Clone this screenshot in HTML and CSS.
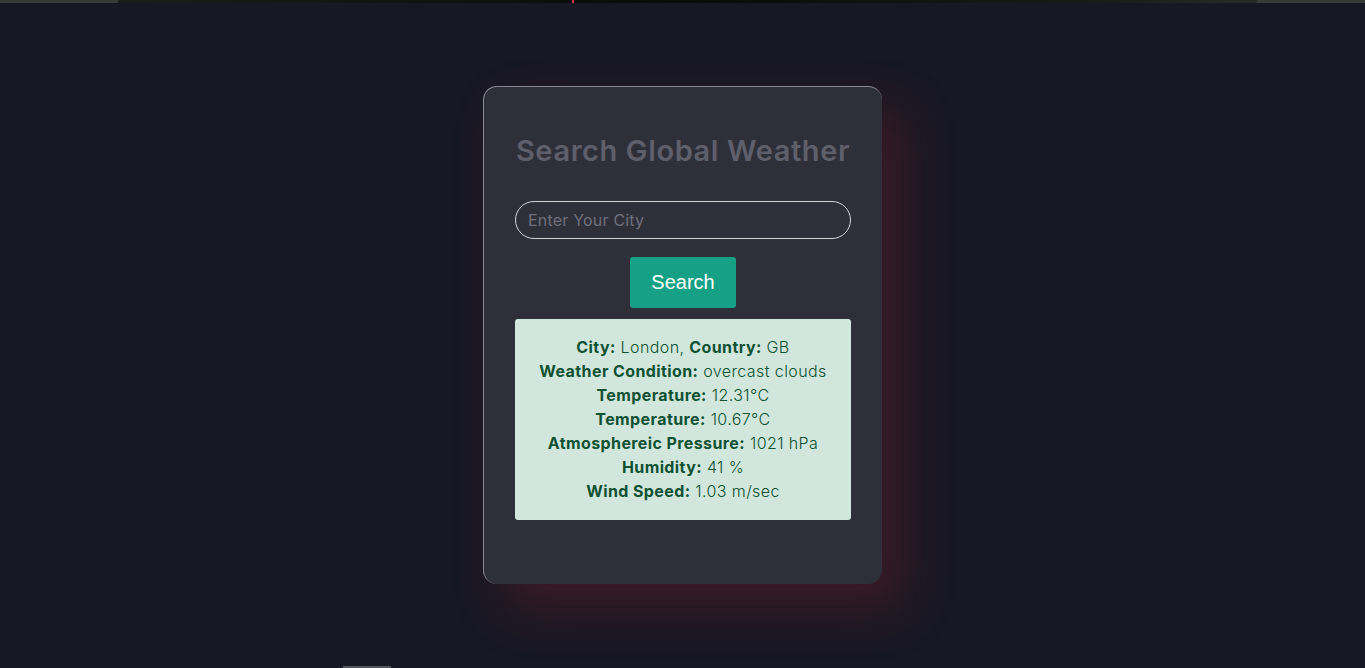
FILE: index.html
```html
<!DOCTYPE html>
<html lang="en">
<head>
<meta charset="utf-8">
<title>Search Global Weather</title>
<link rel="stylesheet" href="styles.css">
</head>
<body>
<div class="topbar"><span class="tb-mark"></span></div>
<main class="page">
  <section class="card">
    <h1 class="title">Search Global Weather</h1>
    <input class="city-input" type="text" placeholder="Enter Your City">
    <div class="btn-row"><button class="search-btn">Search</button></div>
    <div class="result">
      <p><b>City:</b> London, <b>Country:</b> GB</p>
      <p><b>Weather Condition:</b> overcast clouds</p>
      <p><b>Temperature:</b> 12.31°C</p>
      <p><b>Temperature:</b> 10.67°C</p>
      <p><b>Atmosphereic Pressure:</b> 1021 hPa</p>
      <p><b>Humidity:</b> 41 %</p>
      <p><b>Wind Speed:</b> 1.03 m/sec</p>
    </div>
  </section>
</main>
<div class="bottom-mark"></div>
</body>
</html>
```
FILE: styles.css
```css
html, body {
  margin: 0;
  padding: 0;
  height: 100%;
}
body {
  background: #181824;
  font-family: Inter, "Open Sans", sans-serif;
  overflow: hidden;
  position: relative;
}
.topbar {
  height: 3px;
  background: linear-gradient(90deg, #3a3a3a 0, #3a3a3a 118px, #1c1c1c 118px, #0a0a0a 50%, #1a1a1a 80%, #2a2a2a 92%, #3a3a3a 92.2%, #3a3a3a 100%);
  position: relative;
}
.tb-mark {
  position: absolute;
  left: 572px;
  top: 0;
  width: 2px;
  height: 3px;
  background: #c4334a;
}
.page {
  display: flex;
  justify-content: center;
  padding-top: 83px;
}
.card {
  box-sizing: border-box;
  width: 399px;
  height: 498px;
  padding: 32px 31px 0 31px;
  background: #2f2f3a;
  border-radius: 14px;
  border-top: 1px solid #8a8a94;
  border-left: 1px solid #8a8a94;
  box-shadow: 22px 24px 48px rgba(110, 30, 40, 0.42);
  display: flex;
  flex-direction: column;
}
.title {
  margin: 13px 0 0;
  font-size: 29px;
  line-height: 38px;
  font-weight: 600;
  color: #5f5f6b;
  text-align: center;
  white-space: nowrap;
  letter-spacing: 0.6px;
}
.city-input {
  box-sizing: border-box;
  margin-top: 31px;
  width: 336px;
  height: 38px;
  border: 1px solid #d4d4d8;
  border-radius: 20px;
  background: transparent;
  padding: 0 12px;
  font-family: inherit;
  font-size: 16px;
  letter-spacing: 0.2px;
  color: #ddd;
  outline: none;
}
.city-input::placeholder {
  color: #70707c;
}
.btn-row {
  display: flex;
  justify-content: center;
  margin-top: 18px;
}
.search-btn {
  width: 106px;
  height: 51px;
  border: none;
  border-radius: 3px;
  background: #16a085;
  color: #ffffff;
  font-family: "Liberation Sans", Arial, sans-serif;
  font-size: 20px;
  cursor: pointer;
}
.result {
  margin-top: 11px;
  width: 336px;
  box-sizing: border-box;
  height: 201px;
  padding: 16px 0 0;
  background: #d1e7dd;
  border-radius: 3px;
  color: #0f5132;
  text-align: center;
  font-size: 16px;
  font-weight: 350;
  letter-spacing: 0.4px;
}
.result p {
  margin: 0;
  line-height: 24px;
  white-space: nowrap;
}
.result b {
  font-weight: 700;
}
.bottom-mark {
  position: absolute;
  left: 343px;
  bottom: 0;
  width: 48px;
  height: 2px;
  background: #55555f;
}
```
